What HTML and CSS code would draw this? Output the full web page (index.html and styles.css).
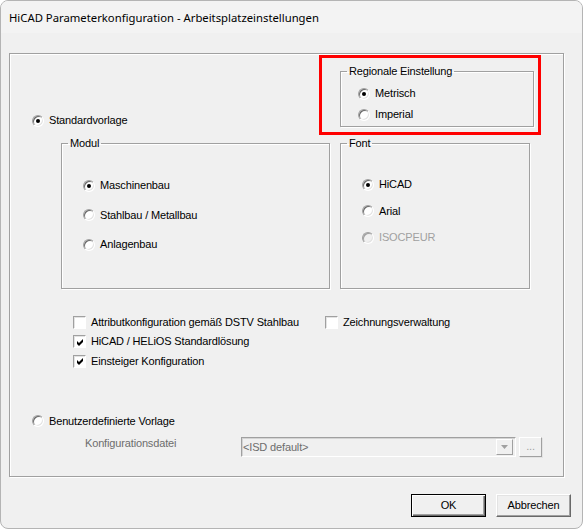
FILE: index.html
```html
<!DOCTYPE html>
<html lang="de">
  <head>
    <meta charset="UTF-8" />
    <title>HiCAD Parameterkonfiguration</title>
    <link rel="stylesheet" href="styles.css">
  </head>
  <body>
    <div class="window">
      <div class="titlebar">HiCAD Parameterkonfiguration - Arbeitsplatzeinstellungen</div>
      <div class="client">
        <div class="panel">
          <div class="top-row">
            <div class="option standard"><span class="radio checked"></span>Standardvorlage</div>
            <div class="highlight">
              <fieldset class="group regional">
                <legend>Regionale Einstellung</legend>
                <div class="option"><span class="radio checked"></span>Metrisch</div>
                <div class="option"><span class="radio"></span>Imperial</div>
              </fieldset>
            </div>
          </div>

          <div class="groups">
            <fieldset class="group modul">
              <legend>Modul</legend>
              <div class="option"><span class="radio checked"></span>Maschinenbau</div>
              <div class="option"><span class="radio"></span>Stahlbau / Metallbau</div>
              <div class="option"><span class="radio"></span>Anlagenbau</div>
            </fieldset>
            <fieldset class="group font">
              <legend>Font</legend>
              <div class="option"><span class="radio checked"></span>HiCAD</div>
              <div class="option"><span class="radio"></span>Arial</div>
              <div class="option disabled"><span class="radio"></span>ISOCPEUR</div>
            </fieldset>
          </div>

          <div class="checks">
            <div class="option"><span class="checkbox"></span>Attributkonfiguration gemäß DSTV Stahlbau</div>
            <div class="option"><span class="checkbox"></span>Zeichnungsverwaltung</div>
            <div class="option"><span class="checkbox checked"><svg viewBox="0 0 7 7" width="7" height="7"><polygon points="0,2 2,4 6,0 6,3 2,7 0,5" fill="#000"/></svg></span>HiCAD / HELiOS Standardlösung</div>
            <div></div>
            <div class="option"><span class="checkbox checked"><svg viewBox="0 0 7 7" width="7" height="7"><polygon points="0,2 2,4 6,0 6,3 2,7 0,5" fill="#000"/></svg></span>Einsteiger Konfiguration</div>
          </div>

          <div class="option custom"><span class="radio"></span>Benutzerdefinierte Vorlage</div>

          <div class="file-row">
            <div class="file-label">Konfigurationsdatei</div>
            <div class="combo">
              <span class="combo-text">&lt;ISD default&gt;</span>
              <span class="combo-arrow">
                <svg viewBox="0 0 7 4" width="7" height="4"><polygon points="0,0 7,0 3.5,4" fill="#a0a0a0"/></svg>
              </span>
            </div>
            <div class="browse">...</div>
          </div>
        </div>

        <div class="buttons">
          <div class="button default">OK</div>
          <div class="button">Abbrechen</div>
        </div>
      </div>
    </div>
  </body>
</html>
```

FILE: styles.css
```css
* {
  box-sizing: border-box;
}

body {
  margin: 0;
  background: #fff;
  font-family: "Liberation Sans", Arial, sans-serif;
  font-size: 11px;
  letter-spacing: -0.15px;
  color: #000;
}

.window {
  width: 583px;
  height: 529px;
  border: 1px solid #b4b4b4;
  border-radius: 8px;
  background: #f0f0f0;
  overflow: hidden;
}

.titlebar {
  height: 32px;
  padding-left: 8px;
  line-height: 33px;
  background: #f3f3f3;
  font-family: "Noto Sans", "Open Sans", sans-serif;
  font-size: 11.3px;
  letter-spacing: 0;
}

.client {
  padding: 20px 10px 0 8px;
}

/* etched frame around the whole settings area */
.panel {
  width: 555px;
  height: 424px;
  border: 1px solid #a0a0a0;
  box-shadow: 1px 1px 0 #fff, inset 1px 1px 0 #fff;
  padding-top: 1px;
}

.option {
  display: flex;
  align-items: center;
  height: 13px;
  line-height: 13px;
  white-space: nowrap;
}

.option.disabled {
  color: #a0a0a0;
}

.radio {
  flex: none;
  position: relative;
  width: 12px;
  height: 12px;
  margin-right: 5px;
  border-radius: 50%;
  border: 1px solid;
  border-color: #a0a0a0 #fff #fff #a0a0a0;
  box-shadow: inset 1px 1px 0 #696969, inset -1px -1px 0 #e3e3e3;
  background: #fff;
}

.option.disabled .radio {
  background: #f0f0f0;
  box-shadow: inset 1px 1px 0 #a0a0a0, inset -1px -1px 0 #e3e3e3;
}

.radio.checked::after {
  content: "";
  position: absolute;
  left: 3px;
  top: 3px;
  width: 4px;
  height: 4px;
  border-radius: 50%;
  background: #000;
}

.checkbox {
  flex: none;
  display: flex;
  align-items: center;
  justify-content: center;
  width: 13px;
  height: 13px;
  margin-right: 5px;
  border: 1px solid;
  border-color: #a0a0a0 #fff #fff #a0a0a0;
  box-shadow: inset 1px 1px 0 #e3e3e3;
  background: #fff;
}

.checkbox svg {
  display: block;
  margin: 1px 0 0 1px;
}

.top-row {
  display: flex;
  align-items: flex-start;
}

.standard {
  margin: 59px 0 0 22px;
}

.highlight {
  width: 222px;
  height: 80px;
  margin: 0 22px 0 auto;
  border: 3px solid #f00;
  padding: 7px 4px 0 18px;
}

.group {
  margin: 0;
  min-width: 0;
  padding: 0 0 0 6px;
  border: 1px solid #a0a0a0;
  box-shadow: 1px 1px 0 #fff, inset 1px 1px 0 #fff;
}

.group legend {
  padding: 0 2px;
  line-height: 13px;
}

.regional {
  height: 62px;
  padding-top: 9px;
}

.regional .option {
  margin-left: 11px;
}

.regional .option + .option {
  margin-top: 8px;
}

.groups {
  display: flex;
  gap: 10px;
  margin: 2px 0 0 51px;
}

.modul {
  width: 269px;
  height: 152px;
  padding-top: 29px;
}

.font {
  width: 190px;
  height: 152px;
  padding-top: 28px;
}

.modul .option,
.font .option {
  margin-left: 15px;
}

.modul .option + .option {
  margin-top: 16.5px;
}

.font .option + .option {
  margin-top: 13.5px;
}

.checks {
  display: grid;
  grid-template-columns: 252px auto;
  grid-auto-rows: 13px;
  row-gap: 6.5px;
  margin: 26.5px 0 0 63px;
}

.custom {
  margin: 47px 0 0 22px;
}

.file-row {
  display: flex;
  align-items: flex-start;
  margin: 9.5px 0 0 75px;
}

.file-label {
  width: 156px;
  line-height: 13px;
  color: #6d6d6d;
}

.combo {
  display: flex;
  align-items: center;
  width: 275px;
  height: 20px;
  padding: 2px 2px 2px 0;
  border: 1px solid;
  border-color: #a0a0a0 #fff #fff #a0a0a0;
  box-shadow: inset 1px 1px 0 #d4d4d4;
  background: #f0f0f0;
}

.combo-text {
  flex: 1;
  padding-left: 1px;
  color: #6d6d6d;
}

.combo-arrow {
  display: flex;
  align-items: center;
  justify-content: center;
  width: 17px;
  height: 16px;
  border: 1px solid;
  border-color: #fff #a0a0a0 #a0a0a0 #fff;
  background: #f0f0f0;
}

.browse {
  width: 23px;
  height: 20px;
  margin-left: 3px;
  border: 1px solid;
  border-color: #fff #a0a0a0 #a0a0a0 #fff;
  box-shadow: 1px 1px 0 #e3e3e3;
  text-align: center;
  line-height: 16px;
  color: #a0a0a0;
}

.buttons {
  display: flex;
  justify-content: flex-end;
  gap: 10px;
  margin-top: 17px;
  padding-right: 1px;
}

.button {
  width: 75px;
  height: 23px;
  border: 1px solid;
  border-color: #fff #696969 #696969 #fff;
  box-shadow: inset -1px -1px 0 #a0a0a0, inset 1px 1px 0 #e3e3e3;
  text-align: center;
  line-height: 21px;
}

.button.default {
  border-color: #000;
  box-shadow: inset 1px 1px 0 #fff, inset -1px -1px 0 #696969, inset -2px -2px 0 #a0a0a0;
}
```
